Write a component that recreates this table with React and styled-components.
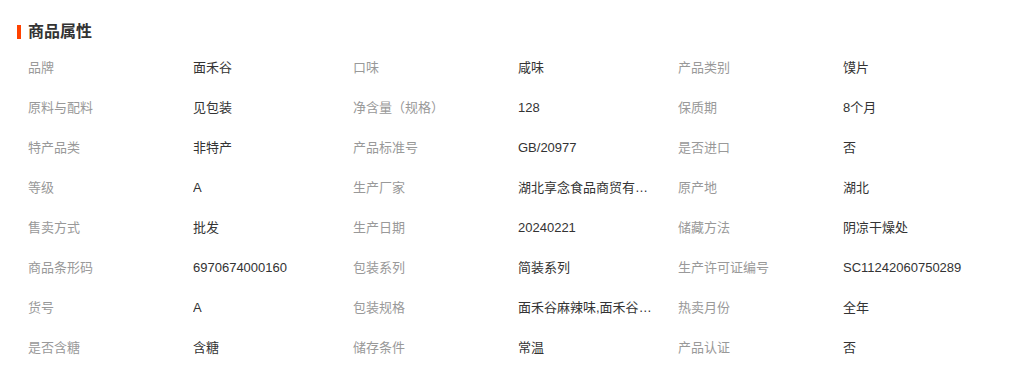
import React from 'react'
import styled, { createGlobalStyle } from 'styled-components'

const GlobalStyle = createGlobalStyle`
  body {
    margin: 0;
    background: #fff;
    font-family: "Liberation Sans", "Noto Sans CJK SC", sans-serif;
  }
`

const Section = styled.div`
  padding: 24px 0 0 17px;
`

const Header = styled.div`
  display: flex;
  align-items: center;
  gap: 7px;
  height: 16px;
`

const Bar = styled.span`
  width: 4px;
  height: 14px;
  background: #ff4200;
`

const Title = styled.h3`
  margin: 0;
  font-size: 16px;
  line-height: 16px;
  font-weight: bold;
  color: #333;
`

const AttrGrid = styled.div`
  display: grid;
  grid-template-columns: repeat(3, 165px 160px);
  grid-auto-rows: 40px;
  margin: 8px 0 0 11px;
  font-size: 13px;
  line-height: 40px;
`

const Label = styled.div`
  color: #999;
  white-space: nowrap;
`

const Value = styled.div`
  color: #333;
  padding-right: 20px;
  white-space: nowrap;
  overflow: hidden;
  text-overflow: ellipsis;
`

const attrs = [
  ['品牌', '面禾谷'], ['口味', '咸味'], ['产品类别', '馍片'],
  ['原料与配料', '见包装'], ['净含量（规格）', '128'], ['保质期', '8个月'],
  ['特产品类', '非特产'], ['产品标准号', 'GB/20977'], ['是否进口', '否'],
  ['等级', 'A'], ['生产厂家', '湖北享念食品商贸有限公司'], ['原产地', '湖北'],
  ['售卖方式', '批发'], ['生产日期', '20240221'], ['储藏方法', '阴凉干燥处'],
  ['商品条形码', '6970674000160'], ['包装系列', '简装系列'], ['生产许可证编号', 'SC11242060750289'],
  ['货号', 'A'], ['包装规格', '面禾谷麻辣味,面禾谷五香味'], ['热卖月份', '全年'],
  ['是否含糖', '含糖'], ['储存条件', '常温'], ['产品认证', '否'],
]

const App = () => {
  return (
    <>
      <GlobalStyle />
      <Section>
        <Header>
          <Bar />
          <Title>商品属性</Title>
        </Header>
        <AttrGrid>
          {attrs.map(([name, value]) => (
            <React.Fragment key={name}>
              <Label>{name}</Label>
              <Value title={value}>{value}</Value>
            </React.Fragment>
          ))}
        </AttrGrid>
      </Section>
    </>
  )
}

export default App
